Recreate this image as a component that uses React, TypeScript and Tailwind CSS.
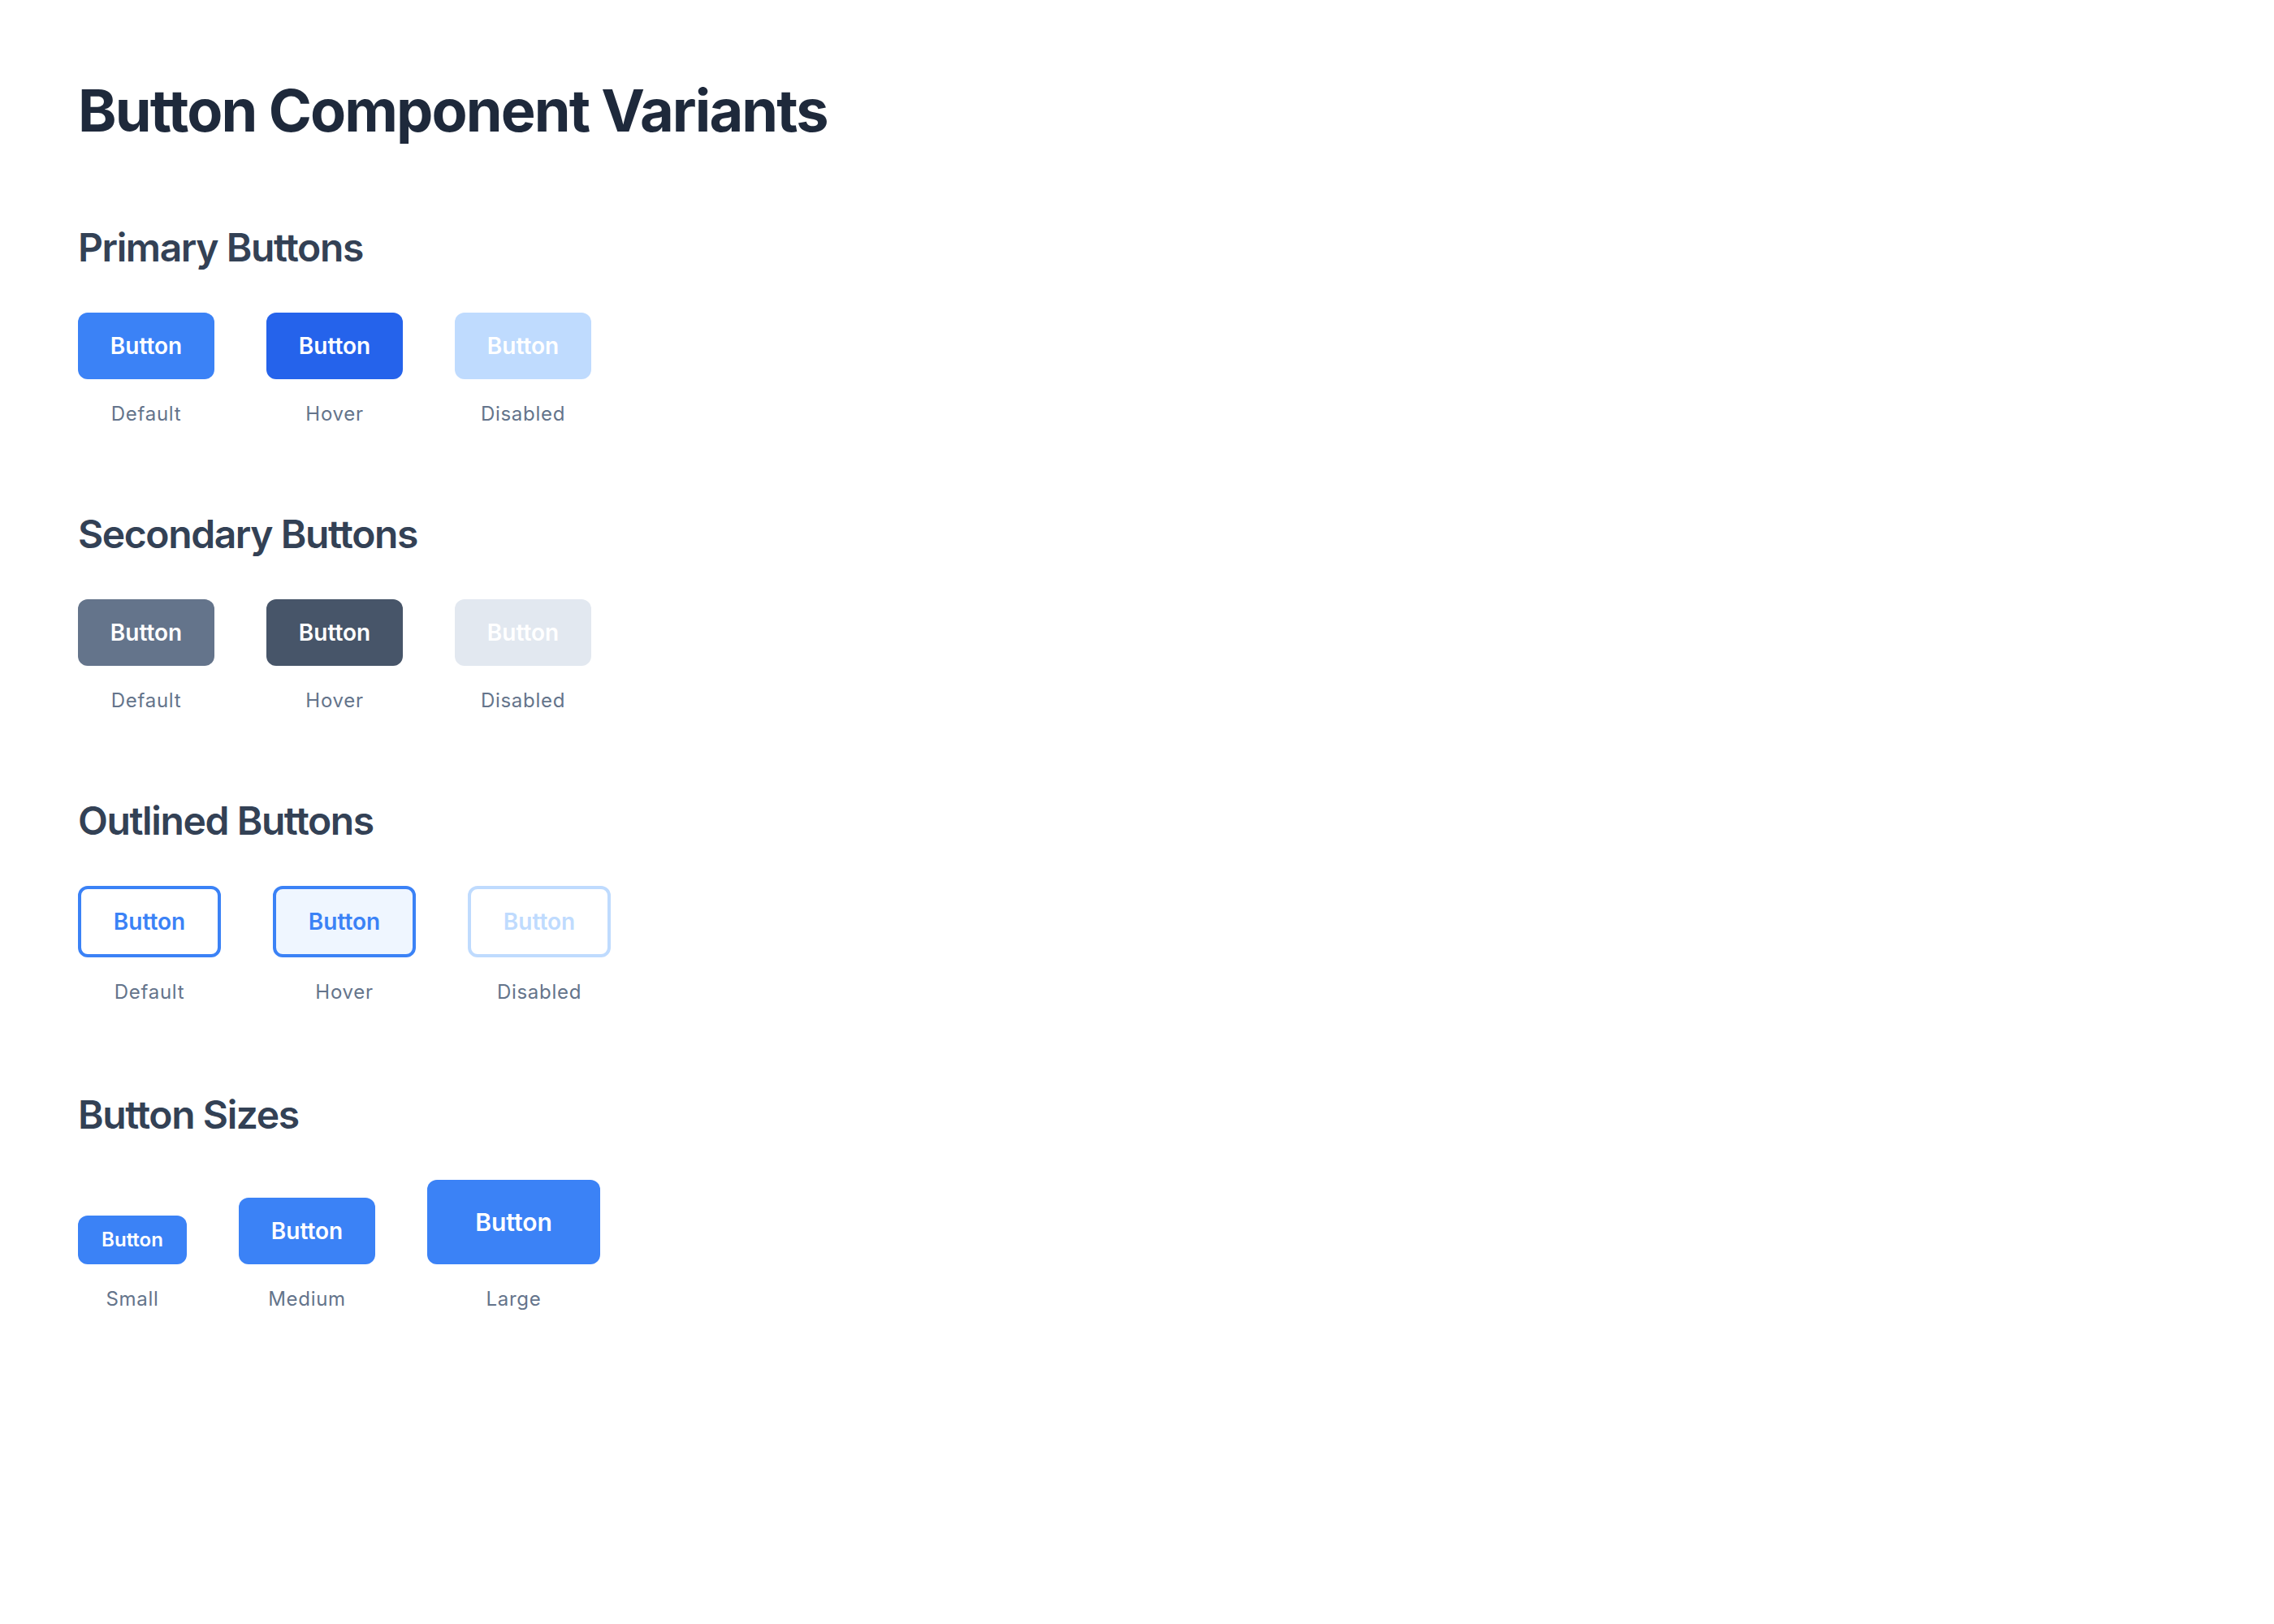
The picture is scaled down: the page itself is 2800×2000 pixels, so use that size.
import React from "react";

type Item = { label: string; cls: string };

function Row({ items }: { items: Item[] }) {
  return (
    <div className="flex items-end gap-[64px]">
      {items.map((it) => (
        <div key={it.label} className="flex flex-col items-center">
          <button className={it.cls}>Button</button>
          <span className="mt-[27px] text-[24px] leading-[32px] tracking-[0.7px] text-[#64748b]">{it.label}</span>
        </div>
      ))}
    </div>
  );
}

function Section({ title, items, className = "" }: { title: string; items: Item[]; className?: string }) {
  return (
    <section className={className}>
      <h2 className="mb-[48px] text-[48px] font-semibold leading-[64px] tracking-[-1.4px] text-[#334155]">{title}</h2>
      <Row items={items} />
    </section>
  );
}

const base = "flex items-center justify-center rounded-[12px] font-semibold";
const mid = `${base} h-[82px] w-[168px] text-[28px] leading-[40px]`;
const outline = `${base} h-[88px] w-[176px] border-[4px] text-[28px] leading-[40px]`;

export default function App() {
  return (
    <div className="min-h-screen bg-white p-[96px] font-['Inter',sans-serif]">
      <h1 className="mb-[97px] text-[72px] font-bold leading-[80px] tracking-[-1.9px] text-[#1e293b]">
        Button Component Variants
      </h1>
      <div className="flex flex-col gap-[100px]">
        <Section
          title="Primary Buttons"
          items={[
            { label: "Default", cls: `${mid} bg-[#3b82f6] text-white` },
            { label: "Hover", cls: `${mid} bg-[#2563eb] text-white` },
            { label: "Disabled", cls: `${mid} bg-[#bfdbfe] text-white` },
          ]}
        />
        <Section
          title="Secondary Buttons"
          items={[
            { label: "Default", cls: `${mid} bg-[#64748b] text-white` },
            { label: "Hover", cls: `${mid} bg-[#475569] text-white` },
            { label: "Disabled", cls: `${mid} bg-[#e2e8f0] text-white` },
          ]}
        />
        <Section
          title="Outlined Buttons"
          items={[
            { label: "Default", cls: `${outline} border-[#3b82f6] bg-white text-[#3b82f6]` },
            { label: "Hover", cls: `${outline} border-[#3b82f6] bg-[#eff6ff] text-[#3b82f6]` },
            { label: "Disabled", cls: `${outline} border-[#bfdbfe] bg-white text-[#bfdbfe]` },
          ]}
        />
        <Section
          className="mt-[3px]"
          title="Button Sizes"
          items={[
            { label: "Small", cls: `${base} h-[60px] w-[134px] bg-[#3b82f6] text-[24px] leading-[32px] text-white` },
            { label: "Medium", cls: `${base} h-[82px] w-[168px] bg-[#3b82f6] text-[28px] leading-[40px] text-white` },
            { label: "Large", cls: `${base} h-[104px] w-[213px] bg-[#3b82f6] text-[30px] leading-[40px] text-white` },
          ]}
        />
      </div>
    </div>
  );
}
